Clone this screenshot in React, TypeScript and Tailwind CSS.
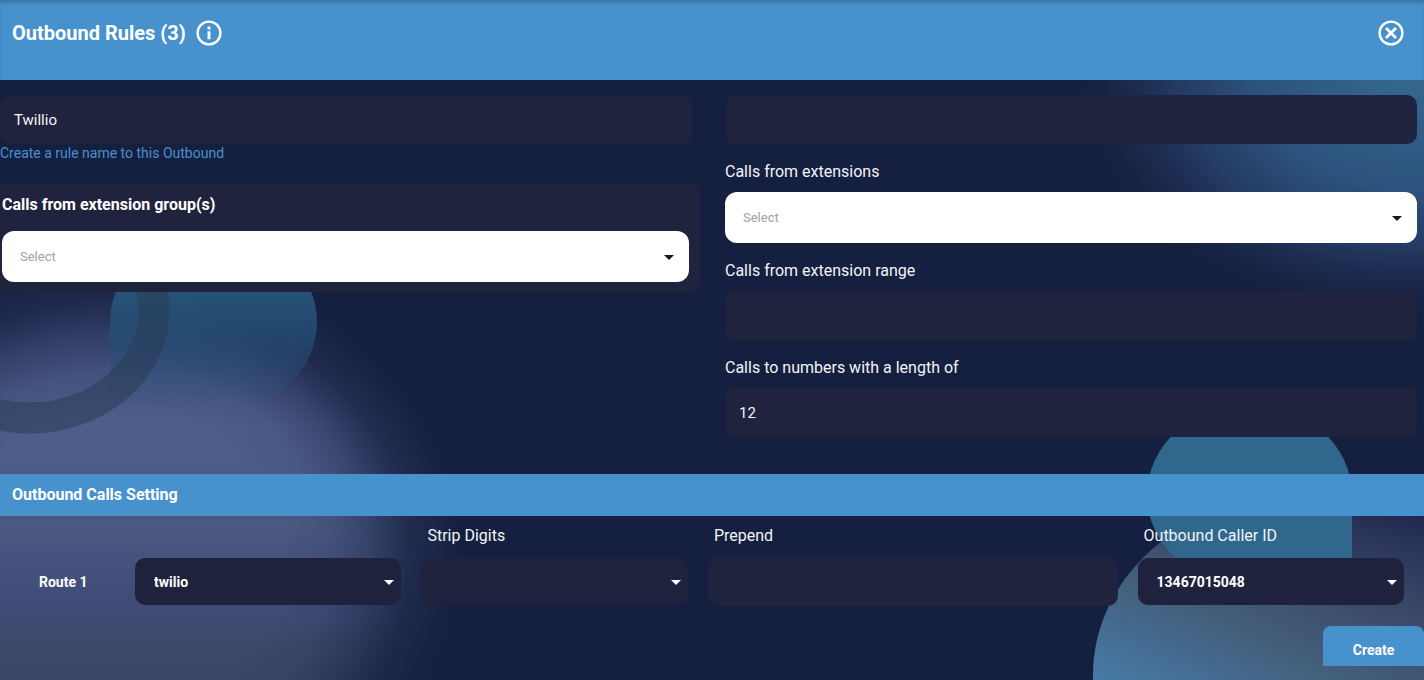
import type { ReactNode } from "react";
import { MdArrowDropDown } from "react-icons/md";

const Backdrop = () => (
  <svg
    className="absolute inset-0 -z-10 h-full w-full"
    viewBox="0 0 1424 680"
    preserveAspectRatio="xMidYMid slice"
    aria-hidden="true"
  >
    <defs>
      <radialGradient id="softEdge">
        <stop offset="0.48" stopColor="#fff" />
        <stop offset="0.61" stopColor="#fff" stopOpacity="0.92" />
        <stop offset="0.72" stopColor="#fff" stopOpacity="0.66" />
        <stop offset="0.84" stopColor="#fff" stopOpacity="0.24" />
        <stop offset="1" stopColor="#fff" stopOpacity="0" />
      </radialGradient>
      <mask id="glowMask">
        <ellipse cx="120" cy="560" rx="345" ry="312" fill="url(#softEdge)" />
      </mask>
      <linearGradient id="violet" x1="0" y1="0" x2="0" y2="1">
        <stop offset="0" stopColor="#34406b" />
        <stop offset="0.42" stopColor="#4e5e8b" />
        <stop offset="0.65" stopColor="#4a5882" />
        <stop offset="0.82" stopColor="#404c77" />
        <stop offset="0.94" stopColor="#3b4867" />
        <stop offset="1" stopColor="#3b4768" />
      </linearGradient>
      <radialGradient id="blueGlow">
        <stop offset="0" stopColor="#35688f" />
        <stop offset="0.45" stopColor="#2c527e" />
        <stop offset="0.68" stopColor="#263f68" stopOpacity="0.85" />
        <stop offset="0.84" stopColor="#1e3054" stopOpacity="0.5" />
        <stop offset="1" stopColor="#172345" stopOpacity="0" />
      </radialGradient>
      <linearGradient id="tealFade" x1="0" y1="0" x2="0" y2="1">
        <stop offset="0.32" stopColor="#265478" />
        <stop offset="0.62" stopColor="#254c74" stopOpacity="0.75" />
        <stop offset="0.97" stopColor="#2c5480" stopOpacity="0" />
      </linearGradient>
      <linearGradient id="steel" gradientUnits="userSpaceOnUse" x1="1150" y1="740" x2="1260" y2="500">
        <stop offset="0" stopColor="#4684b0" />
        <stop offset="0.32" stopColor="#456c93" />
        <stop offset="0.5" stopColor="#43607c" />
        <stop offset="0.78" stopColor="#3d4c6c" />
        <stop offset="1" stopColor="#3c4a6b" />
      </linearGradient>
      <linearGradient id="steelShade" gradientUnits="userSpaceOnUse" x1="1400" y1="505" x2="1370" y2="620">
        <stop offset="0" stopColor="#1d264d" />
        <stop offset="1" stopColor="#2c365a" stopOpacity="0" />
      </linearGradient>
    </defs>
    <rect width="1424" height="680" fill="#151f40" />
    <rect y="240" width="500" height="440" fill="url(#violet)" mask="url(#glowMask)" />
    <path d="M110 322a103.500 91 0 1 1 103.500 91H110z" fill="url(#tealFade)" />
    <ellipse cx="30" cy="310" rx="124" ry="108" fill="none" stroke="#2a3d55" strokeOpacity="0.55" strokeWidth="31" />
    <ellipse cx="1410" cy="80" rx="345" ry="245" fill="url(#blueGlow)" />
    <path d="M1295 497H1424V680H1093V675A202 178 0 0 1 1295 497z" fill="url(#steel)" />
    <path d="M1295 497H1424V680H1093V675A202 178 0 0 1 1295 497z" fill="url(#steelShade)" />
    <path d="M1352 495A102.500 91 0 1 0 1249.500 586H1352z" fill="#30688d" />
  </svg>
);

const InfoIcon = () => (
  <svg className="size-[26px]" viewBox="0 0 26 26" fill="none" stroke="currentColor" aria-hidden="true">
    <circle cx="13" cy="13" r="11.4" strokeWidth="2.400" />
    <path d="M13 6.500v3M13 11.200v8" strokeWidth="2.900" />
  </svg>
);

const CloseIcon = () => (
  <svg className="size-[26px]" viewBox="0 0 26 26" fill="none" stroke="currentColor" aria-hidden="true">
    <circle cx="13" cy="13" r="11.4" strokeWidth="2.400" />
    <path d="M8 8l10 10M18 8l-10 10" strokeWidth="2.700" />
  </svg>
);

const TextField = ({
  id,
  label,
  value = "",
  describedBy,
}: {
  id: string;
  label?: string;
  value?: string;
  describedBy?: string;
}) => (
  <input
    id={id}
    type="text"
    aria-label={label}
    aria-describedby={describedBy}
    defaultValue={value}
    className="block h-[49px] w-full rounded-[10px] bg-[#20233d] px-[14px] text-[15px] text-gray-100 outline-none"
  />
);

const PickerField = ({ id }: { id: string }) => (
  <div className="relative">
    <select
      id={id}
      className="block h-[51px] w-full appearance-none rounded-xl bg-white px-[18px] text-[13px] text-neutral-400 outline-none"
    >
      <option>Select</option>
    </select>
    <MdArrowDropDown className="pointer-events-none absolute top-[14px] right-2 size-6 text-neutral-900" />
  </div>
);

const RouteSelect = ({
  id,
  label,
  value,
}: {
  id: string;
  label?: string;
  value: string;
}) => (
  <div className="relative">
    <select
      id={id}
      aria-label={label}
      className="block h-[47px] w-full appearance-none rounded-[10px] bg-[#1f223d] px-[19px] text-sm font-bold text-white outline-none"
    >
      <option>{value}</option>
    </select>
    <MdArrowDropDown className="pointer-events-none absolute top-3 right-0 size-6 text-white" />
  </div>
);

const FieldLabel = ({
  htmlFor,
  children,
}: {
  htmlFor: string;
  children: ReactNode;
}) => (
  <label htmlFor={htmlFor} className="block text-base leading-6 text-gray-100">
    {children}
  </label>
);

const App = () => {
  return (
    <div className="relative isolate flex min-h-screen flex-col overflow-hidden bg-[#151f40] font-['Roboto',sans-serif] text-white">
      <Backdrop />

      <header className="flex h-20 items-start justify-between bg-[#4791cd] pt-5 pr-5 pl-3 shadow-[inset_0_4px_4px_-2px_rgba(0,0,0,0.25)]">
        <div className="flex items-center gap-[10px]">
          <h1 className="text-xl leading-6 font-bold">Outbound Rules (3)</h1>
          <button type="button" aria-label="About outbound rules">
            <InfoIcon />
          </button>
        </div>
        <button type="button" aria-label="Close">
          <CloseIcon />
        </button>
      </header>

      <form className="flex flex-col">
        <div className="grid grid-cols-2 gap-x-[33px] pt-[15px] pr-[7px] pb-[37px]">
          <div>
            <TextField id="rule-name" label="Rule name" value="Twillio" describedBy="rule-name-help" />
            <p id="rule-name-help" className="text-sm leading-[18px] text-[#4791cd]">
              Create a rule name to this Outbound
            </p>
            <div className="mt-[21px] -mr-2 rounded-r-[10px] bg-[#20233d] pt-[10px] pr-[11px] pb-[10px] pl-[2px]">
              <label htmlFor="groups" className="mb-[14px] block text-base leading-6 font-bold">
                Calls from extension group(s)
              </label>
              <PickerField id="groups" />
            </div>
          </div>

          <div className="flex flex-col gap-4">
            <TextField id="pattern" label="Calls to numbers starting with" />
            <div className="flex flex-col gap-2">
              <FieldLabel htmlFor="extensions">Calls from extensions</FieldLabel>
              <PickerField id="extensions" />
            </div>
            <div className="flex flex-col gap-2">
              <FieldLabel htmlFor="range">Calls from extension range</FieldLabel>
              <TextField id="range" />
            </div>
            <div className="flex flex-col gap-2">
              <FieldLabel htmlFor="length">Calls to numbers with a length of</FieldLabel>
              <TextField id="length" value="12" />
            </div>
          </div>
        </div>

        <h2 className="bg-[#4791cd] px-3 text-base leading-[42px] font-bold">
          Outbound Calls Setting
        </h2>

        <div className="grid grid-cols-[135px_2fr_2fr_3fr_2fr] items-center gap-y-[9px] pt-2">
          <div className="col-start-3 pl-[6px]">
            <FieldLabel htmlFor="strip">Strip Digits</FieldLabel>
          </div>
          <div className="pl-[6px]">
            <FieldLabel htmlFor="prepend">Prepend</FieldLabel>
          </div>
          <div className="pl-[6px]">
            <FieldLabel htmlFor="caller">Outbound Caller ID</FieldLabel>
          </div>

          <div className="pl-[39px] text-sm font-bold">Route 1</div>
          <div className="pr-5">
            <RouteSelect id="route" label="Route 1" value="twilio" />
          </div>
          <div className="pr-5">
            <RouteSelect id="strip" value="" />
          </div>
          <div className="pr-5">
            <TextField id="prepend" />
          </div>
          <div className="pr-5">
            <RouteSelect id="caller" value="13467015048" />
          </div>
        </div>

        <button
          type="submit"
          className="mt-5 h-10 w-[101px] self-end rounded-t-lg bg-[#4791cd] pt-2 text-sm font-bold text-white"
        >
          Create
        </button>
      </form>
    </div>
  );
};

export default App;
